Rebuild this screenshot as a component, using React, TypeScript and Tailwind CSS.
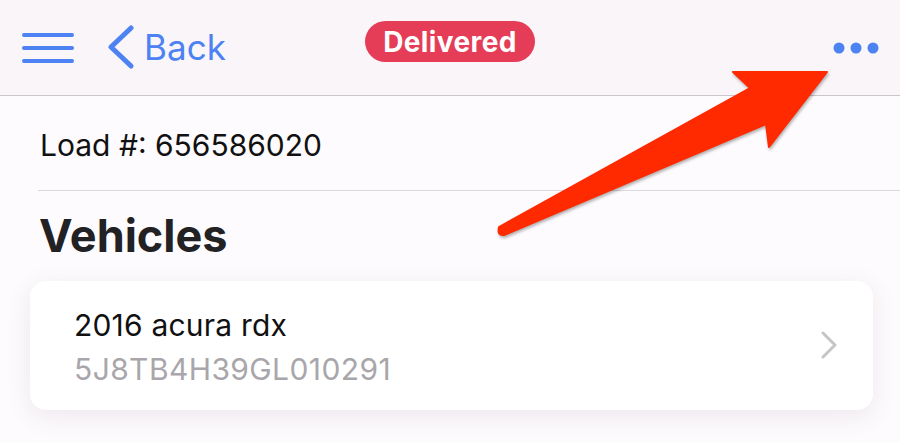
const font = { fontFamily: 'Inter, "Noto Sans", sans-serif' };

function Hamburger() {
  return (
    <svg width="56" height="34" viewBox="0 0 56 34" className="block">
      <g stroke="#4c82f2" strokeWidth="4" strokeLinecap="round">
        <line x1="4" y1="4" x2="52" y2="4" />
        <line x1="4" y1="17" x2="52" y2="17" />
        <line x1="4" y1="30" x2="52" y2="30" />
      </g>
    </svg>
  );
}

function BackChevron() {
  return (
    <svg width="30" height="46" viewBox="0 0 30 46" className="block">
      <polyline
        points="24,3 4,22 24,41"
        fill="none"
        stroke="#4c82f2"
        strokeWidth="5"
        strokeLinecap="round"
        strokeLinejoin="round"
      />
    </svg>
  );
}

function MoreDots() {
  return (
    <svg width="46" height="12" viewBox="0 0 46 12" className="block">
      <g fill="#4c82f2">
        <circle cx="6" cy="6" r="5.5" />
        <circle cx="23" cy="6" r="5.5" />
        <circle cx="40" cy="6" r="5.5" />
      </g>
    </svg>
  );
}

function RowChevron() {
  return (
    <svg width="20" height="30" viewBox="0 0 20 30" className="block">
      <polyline
        points="4,2 16,14 4,26"
        fill="none"
        stroke="#c6c4c8"
        strokeWidth="3"
        strokeLinecap="round"
        strokeLinejoin="round"
      />
    </svg>
  );
}

// the red annotation arrow drawn over the screenshot
function Annotation() {
  return (
    <svg
      className="absolute inset-0 pointer-events-none"
      width="900"
      height="442"
      viewBox="0 0 900 442"
      style={{ filter: 'drop-shadow(1px 2px 1.5px rgba(0,0,0,0.3))' }}
    >
      <path
        d="M499 227 L750 88 L733 72 L827 72 L769 147 L766 124 L504 235 Q497 236 499 227 Z"
        fill="#ff2a00"
        stroke="#ff2a00"
        strokeWidth="2"
        strokeLinejoin="round"
      />
    </svg>
  );
}

export default function App() {
  return (
    <div className="relative w-[900px] h-[442px] overflow-hidden bg-[#fdfbfd]" style={font}>
      <header className="h-[96px] grid grid-cols-[1fr_auto_1fr] items-center bg-[#f9f5f9] border-b border-[#cbc6cd]">
        <div className="flex items-center pl-[20px]">
          <Hamburger />
          <div className="ml-[31px] flex items-center">
            <BackChevron />
            <span className="ml-[7px] text-[35px] leading-none text-[#4c82f2] tracking-[0.1px]">Back</span>
          </div>
        </div>
        <div className="-mt-[12px] h-[41px] px-[18px] rounded-full bg-[#e53c58] flex items-center">
          <span className="text-[28px] font-bold text-white leading-none tracking-[0.4px]">Delivered</span>
        </div>
        <div className="flex justify-end pr-[21px]">
          <MoreDots />
        </div>
      </header>

      <div className="pl-[38px]">
        <div className="h-[95px] flex items-center border-b border-[#dcd9dd] pl-[2px]">
          <span className="mt-[4px] text-[30px] text-[#111] tracking-[0px]">Load #: 656586020</span>
        </div>
        <h2 className="pl-[1px] mt-[15px] text-[45px] font-bold leading-[60px] text-[#222124]">Vehicles</h2>
      </div>

      <div className="mt-[15px] ml-[30px] mr-[27px] h-[129px] rounded-[16px] bg-white shadow-[0_6px_24px_rgba(120,90,130,0.12)] flex items-center justify-between pl-[44px] pr-[34px]">
        <div className="flex flex-col gap-[14px] mt-[2px]">
          <span className="text-[30px] leading-none text-[#111] tracking-[0.2px]">2016 acura rdx</span>
          <span className="text-[30px] leading-none text-[#a8a6aa] tracking-[0.4px]">5J8TB4H39GL010291</span>
        </div>
        <RowChevron />
      </div>

      <Annotation />
    </div>
  );
}
